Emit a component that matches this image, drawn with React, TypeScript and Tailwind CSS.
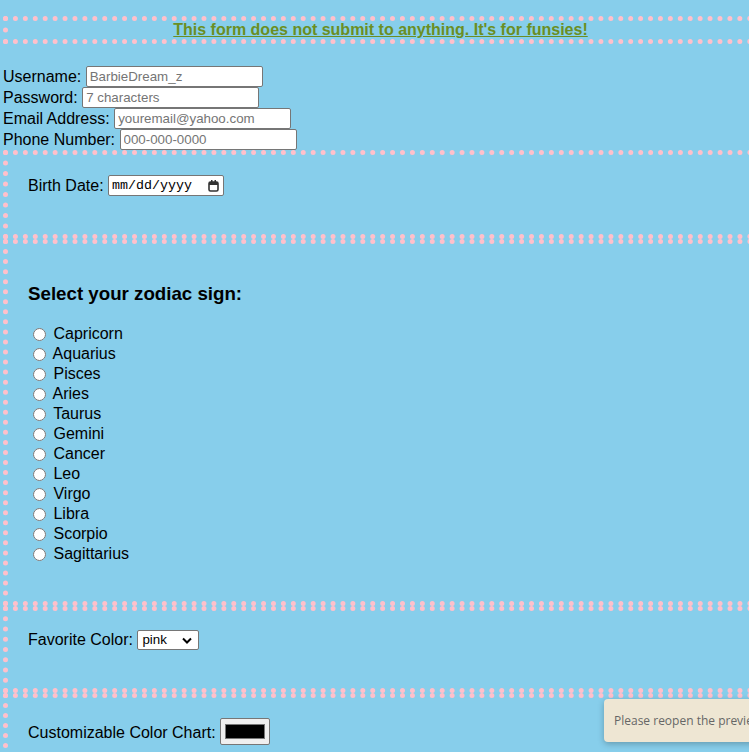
import { useState } from 'react';

const signs = [
  'Capricorn',
  'Aquarius',
  'Pisces',
  'Aries',
  'Taurus',
  'Gemini',
  'Cancer',
  'Leo',
  'Virgo',
  'Libra',
  'Scorpio',
  'Sagittarius',
];

const inputCls =
  'w-[177px] h-[21px] bg-white border border-[#767676] rounded-[2px] px-[3px] text-[13.33px] text-black placeholder:text-[#757575] outline-none';

const section = 'w-[770px] border-[5px] border-dotted border-[#ffc0cb] pl-[20px] pt-[20px]';

export default function App() {
  const [sign, setSign] = useState('');
  const [color, setColor] = useState('pink');

  return (
    <div
      className="relative min-h-screen h-[752px] overflow-hidden bg-[#87ceeb] pl-[3px] text-[16px] text-black"
      style={{ fontFamily: '"Liberation Sans", Arial, sans-serif' }}
    >
      {/* Header */}
      <div className="mt-[16px] w-[750px] border-[5px] border-r-0 border-dotted border-[#ffc0cb]">
        <h1 className="h-[18px] text-center text-[16px] font-bold leading-[18px] text-[#6b8e23] underline">
          This form does not submit to anything. It's for funsies!
        </h1>
      </div>

      {/* Account fields */}
      <form className="mt-[22px]" onSubmit={(e) => e.preventDefault()}>
        <div className="flex h-[21px] items-center">
          <label className="whitespace-pre">Username: </label>
          <input className={inputCls} placeholder="BarbieDream_z" />
        </div>
        <div className="flex h-[21px] items-center">
          <label className="whitespace-pre">Password: </label>
          <input className={inputCls} placeholder="7 characters" />
        </div>
        <div className="flex h-[21px] items-center">
          <label className="whitespace-pre">Email Address: </label>
          <input className={inputCls} placeholder="youremail@yahoo.com" />
        </div>
        <div className="flex h-[21px] items-center">
          <label className="whitespace-pre">Phone Number: </label>
          <input className={inputCls} placeholder="000-000-0000" />
        </div>
      </form>

      {/* Birth date */}
      <div className={`${section} pb-[38px]`}>
        <div className="flex h-[21px] items-center">
          <label className="whitespace-pre">Birth Date: </label>
          <div className="flex h-[21px] w-[116px] items-center justify-between rounded-[2px] border border-[#767676] bg-white pl-[3px] pr-[4px]">
            <span
              className="text-[13.33px] text-black"
              style={{ fontFamily: '"Liberation Mono", monospace' }}
            >
              mm/dd/yyyy
            </span>
            <svg width="11" height="12" viewBox="0 0 11 12" fill="none">
              <rect x="1" y="2" width="9" height="9" rx="1.5" stroke="#333" strokeWidth="1.6" />
              <rect x="1" y="2" width="9" height="3" fill="#333" />
              <rect x="3" y="0" width="1.5" height="2.5" fill="#333" />
              <rect x="6.5" y="0" width="1.5" height="2.5" fill="#333" />
            </svg>
          </div>
        </div>
      </div>

      {/* Zodiac */}
      <div className={`${section} pb-[36.7px]`}>
        <h3 className="mt-[18.72px] mb-[19.5px] text-[18.72px] font-bold leading-[22px]">Select your zodiac sign:</h3>
        {signs.map((s) => (
          <label key={s} className="flex h-[20px] items-center">
            <input
              type="radio"
              name="zodiac"
              checked={sign === s}
              onChange={() => setSign(s)}
              className="ml-[5px] mr-[3px] h-[13px] w-[13px]"
            />
            <span className="whitespace-pre"> {s}</span>
          </label>
        ))}
      </div>

      {/* Favorite color */}
      <div className={`${section} pb-[38px]`}>
        <div className="flex h-[19px] items-center">
          <label className="whitespace-pre">Favorite Color: </label>
          <div className="relative h-[20px] w-[62px] rounded-[2px] border border-[#767676] bg-white">
            <select
              value={color}
              onChange={(e) => setColor(e.target.value)}
              className="block h-[18px] w-full appearance-none bg-transparent py-0 pl-[4px] text-[13.33px] leading-[16px] text-black outline-none"
            >
              <option value="pink">pink</option>
              <option value="blue">blue</option>
              <option value="purple">purple</option>
            </select>
            <svg
              className="pointer-events-none absolute right-[6px] top-[6px]"
              width="10"
              height="7"
              viewBox="0 0 10 7"
              fill="none"
            >
              <path d="M1 1.5l4 4 4-4" stroke="#000" strokeWidth="2" />
            </svg>
          </div>
        </div>
      </div>

      {/* Color chart */}
      <div className={`${section} pb-[38px]`}>
        <div className="flex h-[27px] items-end">
          <label className="whitespace-pre">Customizable Color Chart: </label>
          <div className="flex h-[27px] w-[50px] items-center justify-center rounded-[2px] border border-[#767676] bg-[#efefef]">
            <div className="h-[15px] w-[40px] border border-[#777] bg-black" />
          </div>
        </div>
      </div>

      {/* Toast */}
      <div className="absolute left-[604px] top-[699px] h-[43px] w-[260px] rounded-[4px] bg-[#eee6d3] pl-[10px] shadow-[0_2px_6px_rgba(0,0,0,0.25)]">
        <p
          className="whitespace-nowrap pt-[13px] text-[12px] text-[#666]"
          style={{ fontFamily: '"Open Sans", sans-serif' }}
        >
          Please reopen the preview
        </p>
      </div>
    </div>
  );
}
